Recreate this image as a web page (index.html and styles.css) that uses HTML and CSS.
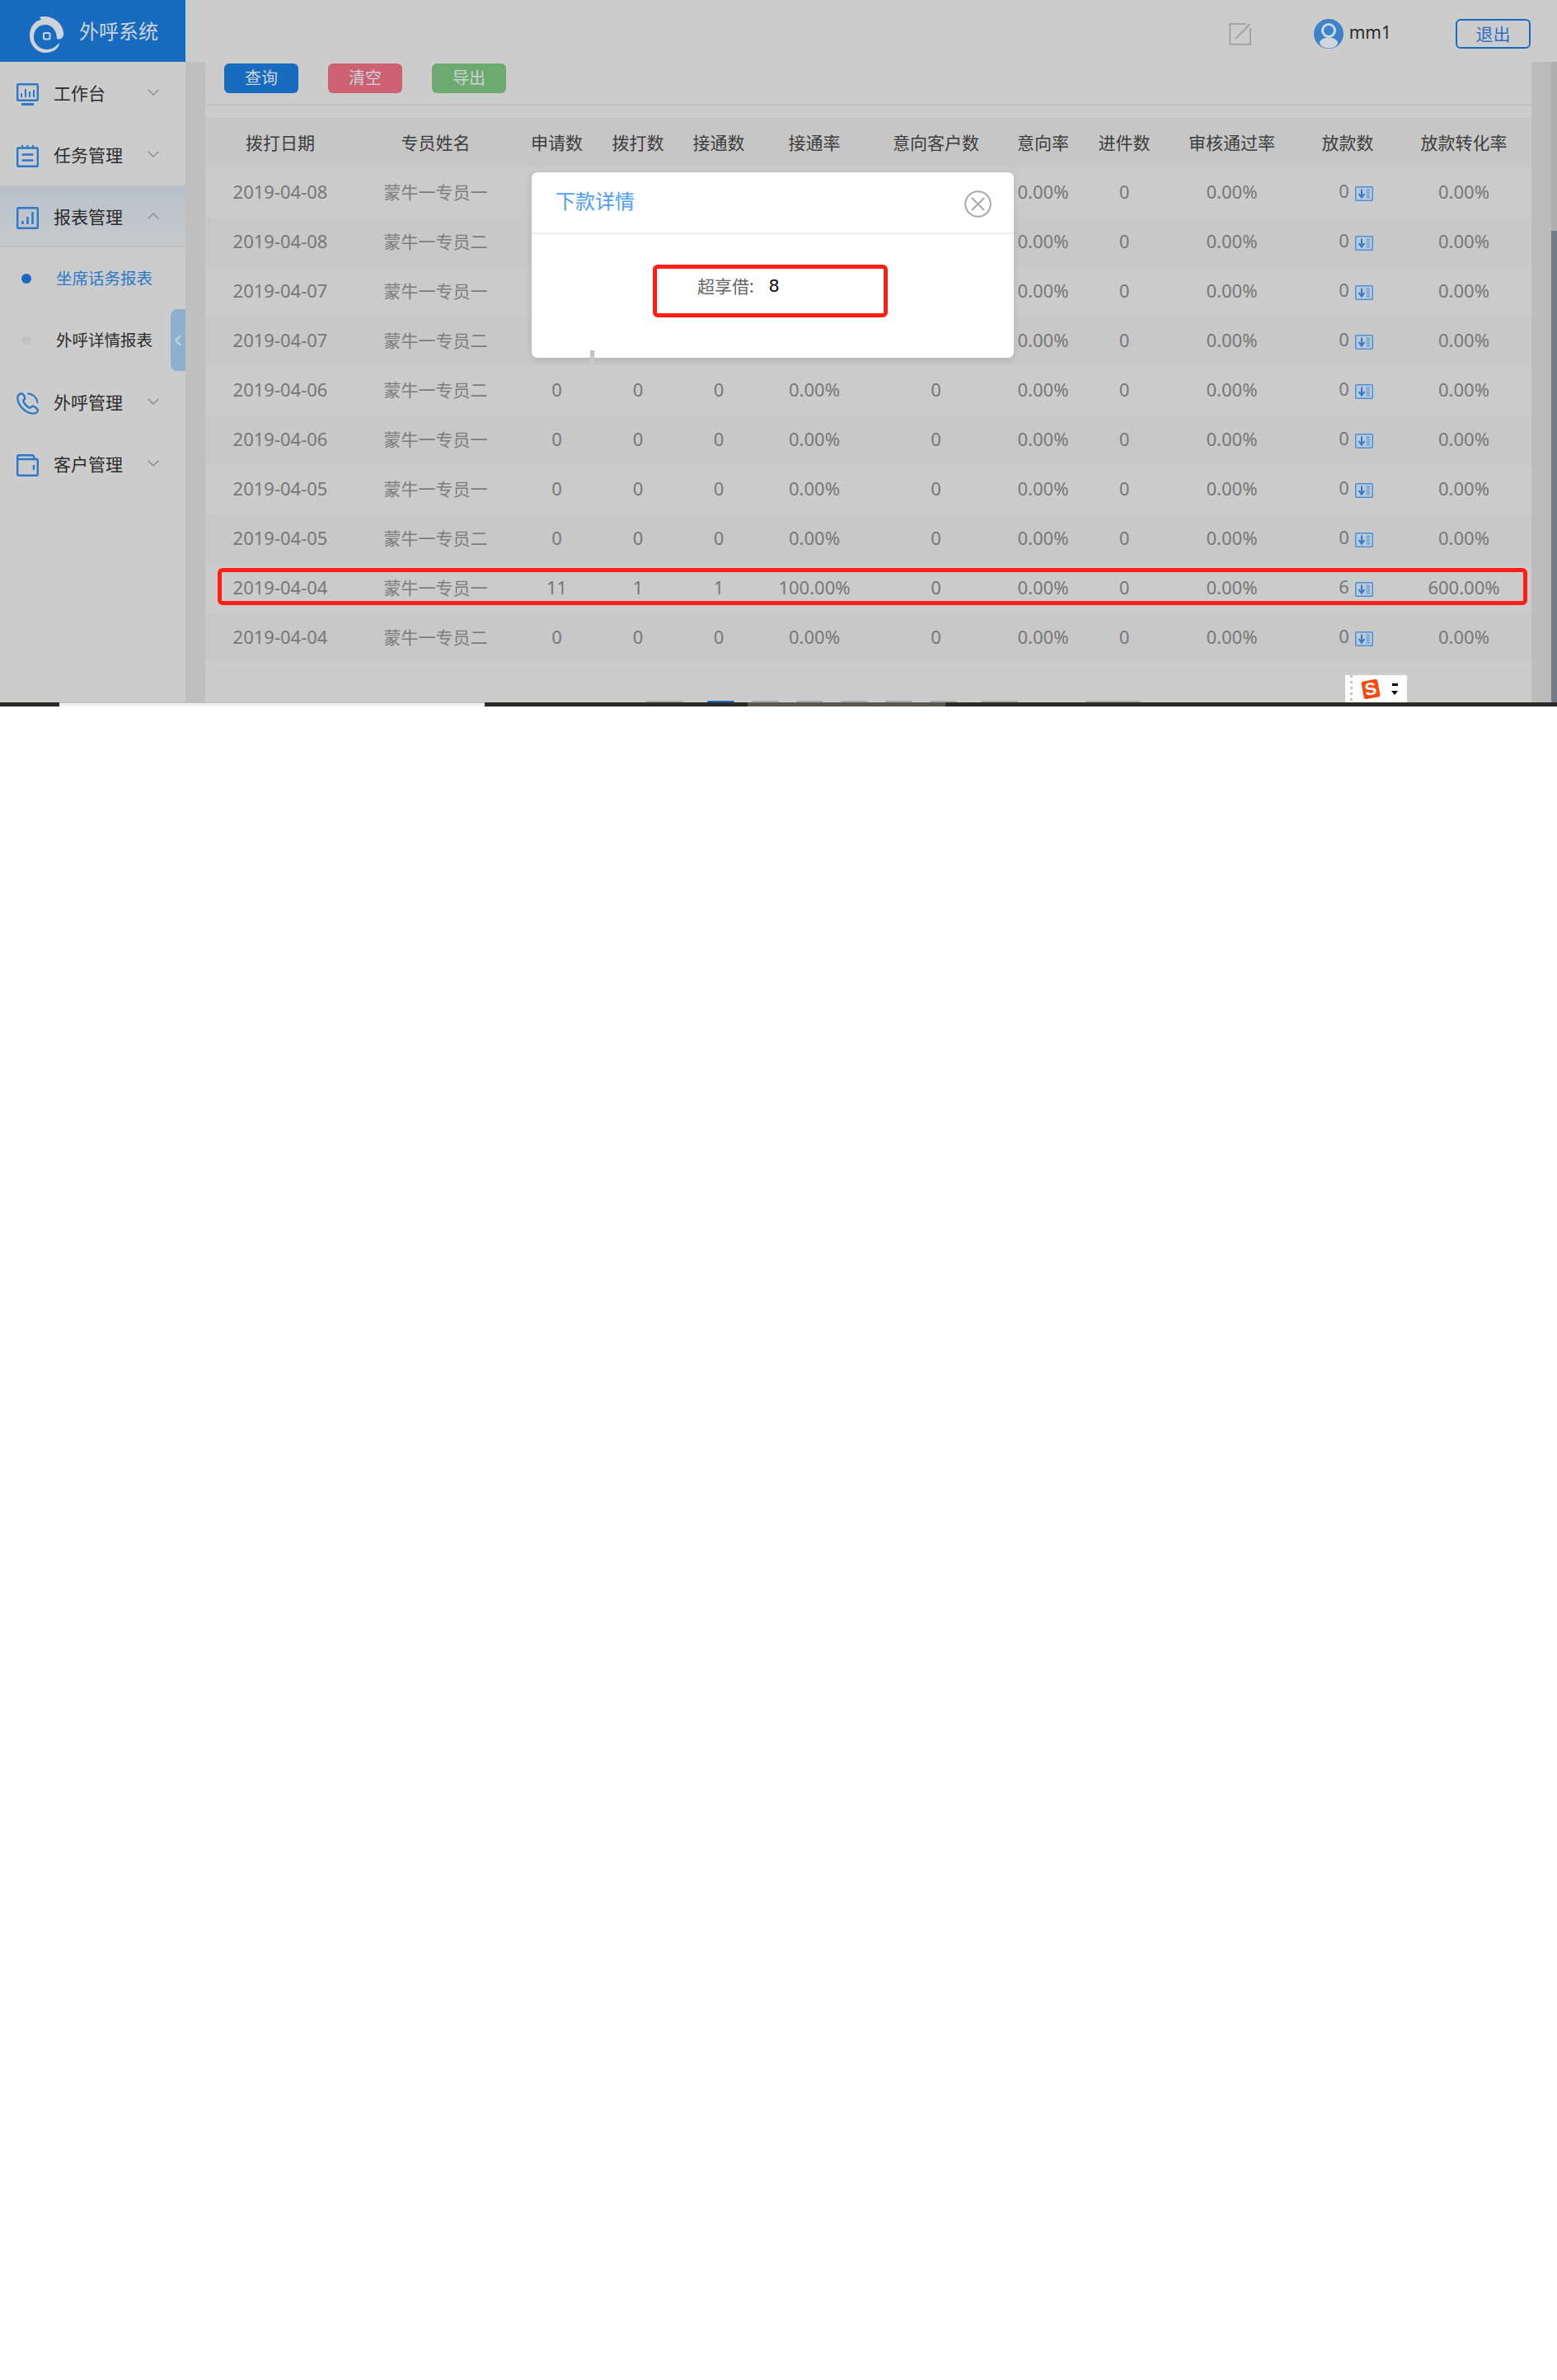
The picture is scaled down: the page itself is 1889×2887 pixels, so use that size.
FILE: index.html
```html
<!DOCTYPE html>
<html lang="zh-CN">
<head>
<meta charset="utf-8">
<title>外呼系统</title>
<link rel="stylesheet" href="styles.css">
</head>
<body>
<svg class="defs" width="0" height="0" aria-hidden="true">
  <symbol id="chev" viewBox="0 0 14 8"><polyline points="0.7,0.7 7,7 13.3,0.7" fill="none" stroke="#8a8a8a" stroke-width="1.3"/></symbol>
  <symbol id="dl" viewBox="0 0 22 18">
    <rect x="0.75" y="0.75" width="20.5" height="16.5" rx="1" fill="#bccad9" stroke="#4f8fd6" stroke-width="1.5"/>
    <path d="M8 3.5V12M4.5 9L8 13.5L11.5 9" fill="none" stroke="#2f7ad0" stroke-width="2"/>
    <path d="M13.5 4.5H18M13.5 7.5H18M13.5 10.5H18M13.5 13.5H18" stroke="#6d9fd8" stroke-width="2"/>
  </symbol>
</svg>
<div class="app">
  <aside class="side">
    <div class="brand">
      <svg class="logo" width="42" height="45" viewBox="0 0 42 45">
        <path d="M12 2C18-1 38 2 41 20C42 26 38 30 33 28C33 18 27 11 19 11C11 11 5 17 5 26C5 35 13 41 21 41C27 41 31 38 36 33C36 40 28 45 19 45C8 45 0 35 0 24C0 14 6 6 14 5Z" fill="#cfd2d6"/>
        <rect x="17" y="21" width="7.5" height="7.5" rx="1.5" fill="none" stroke="#cfd2d6" stroke-width="2"/>
      </svg>
      <span class="brand-name">外呼系统</span>
    </div>
    <nav class="menu">
      <div class="item">
        <svg class="ico" width="27" height="27" viewBox="0 0 27 27" fill="none" stroke="#2c78c9" stroke-width="2.4">
          <rect x="1.2" y="1.2" width="24.6" height="19.6" rx="1"/>
          <path d="M6 17V12M11 17V7M16 17V10M21 17V8" stroke-width="2"/>
          <path d="M6 25.5H21" stroke-width="3"/>
        </svg>
        <span class="label">工作台</span>
        <svg class="chev" width="14" height="8"><use href="#chev"/></svg>
      </div>
      <div class="item">
        <svg class="ico" width="27" height="27" viewBox="0 0 27 27" fill="none" stroke="#2c78c9" stroke-width="2.4">
          <rect x="1.2" y="3.5" width="24.6" height="22.3" rx="1"/>
          <path d="M7 0V5M13.5 0V5M20 0V5" stroke-width="2"/>
          <path d="M6.5 11.5H20.5M6.5 18.5H20.5" stroke-width="2.4"/>
        </svg>
        <span class="label">任务管理</span>
        <svg class="chev" width="14" height="8"><use href="#chev"/></svg>
      </div>
      <div class="item item-open">
        <svg class="ico" width="27" height="27" viewBox="0 0 27 27" fill="none" stroke="#2c78c9" stroke-width="2.4">
          <rect x="1.2" y="1.2" width="24.6" height="24.6" rx="1"/>
          <path d="M7.5 21V17M13.5 21V12M19.5 21V6" stroke-width="2.6"/>
        </svg>
        <span class="label">报表管理</span>
        <svg class="chev chev-up" width="14" height="8"><use href="#chev"/></svg>
      </div>
      <div class="sub sub-active"><i class="dot"></i><span>坐席话务报表</span></div>
      <div class="sub"><i class="dot"></i><span>外呼详情报表</span></div>
      <div class="item">
        <svg class="ico" width="27" height="27" viewBox="0 0 27 27" fill="none" stroke="#2c78c9" stroke-width="2.4" stroke-linecap="round">
          <path d="M6 1.5C3 1.5 1.2 4 1.3 7C1.8 15 10 25.500 20.500 25.600C23.500 25.600 25.800 23.700 25.800 21.500C25.800 19.800 21.500 16.500 19.500 16.700C17.800 16.900 17.500 19.200 15.500 18.600C12.500 17.500 8.500 12.500 8.300 10.500C8.200 9 10 8.700 10.200 7C10.400 5 8 1.500 6 1.500Z"/>
          <path d="M14 1.500C20 1.800 25 6.500 25.500 12.500" stroke-width="2"/>
        </svg>
        <span class="label">外呼管理</span>
        <svg class="chev" width="14" height="8"><use href="#chev"/></svg>
      </div>
      <div class="item">
        <svg class="ico" width="27" height="27" viewBox="0 0 27 27" fill="none" stroke="#2c78c9" stroke-width="2.4">
          <rect x="1.2" y="6" width="24.6" height="19.800" rx="1.500"/>
          <path d="M1.200 6V3C1.200 1.800 2 1.200 3 1.200H19C20.500 1.200 21.500 3 22 6" />
          <path d="M21 13V19" stroke-width="2.400"/>
        </svg>
        <span class="label">客户管理</span>
        <svg class="chev" width="14" height="8"><use href="#chev"/></svg>
      </div>
    </nav>
    <div class="collapse">
      <svg width="8" height="14" viewBox="0 0 8 14"><polyline points="7,1 1.500,7 7,13" fill="none" stroke="#c5d3e0" stroke-width="2"/></svg>
    </div>
  </aside>

  <main class="main">
    <header class="topbar">
      <svg class="pencil" width="27" height="27" viewBox="0 0 27 27" fill="none" stroke="#a3a3a3" stroke-width="2">
        <path d="M21 1H1.200V25.800H26V6"/>
        <path d="M8 19L25.500 1" />
      </svg>
      <svg class="avatar" width="36" height="36" viewBox="0 0 36 36">
        <circle cx="18" cy="18" r="18" fill="#3b83cb"/>
        <circle cx="18" cy="14" r="7.500" fill="#3b83cb" stroke="#cfd6dc" stroke-width="3"/>
        <ellipse cx="18" cy="29" rx="11" ry="6.500" fill="#cfd6dc"/>
      </svg>
      <span class="user">mm1</span>
      <button class="logout" type="button">退出</button>
    </header>
    <div class="workspace">
      <div class="gutter"></div>
      <section class="content">
        <div class="toolbar">
          <button class="btn btn-blue" type="button">查询</button>
          <button class="btn btn-red" type="button">清空</button>
          <button class="btn btn-green" type="button">导出</button>
        </div>
        <table class="grid">
          <thead>
            <tr><th>拨打日期</th><th>专员姓名</th><th>申请数</th><th>拨打数</th><th>接通数</th><th>接通率</th><th>意向客户数</th><th>意向率</th><th>进件数</th><th>审核通过率</th><th>放款数</th><th>放款转化率</th></tr>
          </thead>
          <tbody>
            <tr><td>2019-04-08</td><td class="name">蒙牛一专员一</td><td>0</td><td>0</td><td>0</td><td>0.00%</td><td>0</td><td>0.00%</td><td>0</td><td>0.00%</td><td class="pay">0<svg class="dl" width="22" height="18"><use href="#dl"/></svg></td><td>0.00%</td></tr>
            <tr><td>2019-04-08</td><td class="name">蒙牛一专员二</td><td>0</td><td>0</td><td>0</td><td>0.00%</td><td>0</td><td>0.00%</td><td>0</td><td>0.00%</td><td class="pay">0<svg class="dl" width="22" height="18"><use href="#dl"/></svg></td><td>0.00%</td></tr>
            <tr><td>2019-04-07</td><td class="name">蒙牛一专员一</td><td>0</td><td>0</td><td>0</td><td>0.00%</td><td>0</td><td>0.00%</td><td>0</td><td>0.00%</td><td class="pay">0<svg class="dl" width="22" height="18"><use href="#dl"/></svg></td><td>0.00%</td></tr>
            <tr><td>2019-04-07</td><td class="name">蒙牛一专员二</td><td>0</td><td>0</td><td>0</td><td>0.00%</td><td>0</td><td>0.00%</td><td>0</td><td>0.00%</td><td class="pay">0<svg class="dl" width="22" height="18"><use href="#dl"/></svg></td><td>0.00%</td></tr>
            <tr><td>2019-04-06</td><td class="name">蒙牛一专员二</td><td>0</td><td>0</td><td>0</td><td>0.00%</td><td>0</td><td>0.00%</td><td>0</td><td>0.00%</td><td class="pay">0<svg class="dl" width="22" height="18"><use href="#dl"/></svg></td><td>0.00%</td></tr>
            <tr><td>2019-04-06</td><td class="name">蒙牛一专员一</td><td>0</td><td>0</td><td>0</td><td>0.00%</td><td>0</td><td>0.00%</td><td>0</td><td>0.00%</td><td class="pay">0<svg class="dl" width="22" height="18"><use href="#dl"/></svg></td><td>0.00%</td></tr>
            <tr><td>2019-04-05</td><td class="name">蒙牛一专员一</td><td>0</td><td>0</td><td>0</td><td>0.00%</td><td>0</td><td>0.00%</td><td>0</td><td>0.00%</td><td class="pay">0<svg class="dl" width="22" height="18"><use href="#dl"/></svg></td><td>0.00%</td></tr>
            <tr><td>2019-04-05</td><td class="name">蒙牛一专员二</td><td>0</td><td>0</td><td>0</td><td>0.00%</td><td>0</td><td>0.00%</td><td>0</td><td>0.00%</td><td class="pay">0<svg class="dl" width="22" height="18"><use href="#dl"/></svg></td><td>0.00%</td></tr>
            <tr><td>2019-04-04</td><td class="name">蒙牛一专员一</td><td>11</td><td>1</td><td>1</td><td>100.00%</td><td>0</td><td>0.00%</td><td>0</td><td>0.00%</td><td class="pay">6<svg class="dl" width="22" height="18"><use href="#dl"/></svg></td><td>600.00%</td></tr>
            <tr><td>2019-04-04</td><td class="name">蒙牛一专员二</td><td>0</td><td>0</td><td>0</td><td>0.00%</td><td>0</td><td>0.00%</td><td>0</td><td>0.00%</td><td class="pay">0<svg class="dl" width="22" height="18"><use href="#dl"/></svg></td><td>0.00%</td></tr>
          </tbody>
        </table>
        <div class="pager">
          <i class="pg pg-wide"></i><i class="pg pg-on"></i><i class="pg"></i><i class="pg"></i><i class="pg"></i><i class="pg"></i><i class="pg"></i><i class="pg pg-wide pg-next"></i><i class="pg pg-input"></i>
        </div>
      </section>
      <div class="rail"><div class="thumb"></div></div>
    </div>
  </main>

  <div class="mark mark-row"></div>

  <div class="modal">
    <div class="modal-head">
      <span class="modal-title">下款详情</span>
      <svg width="33" height="33" viewBox="0 0 33 33" fill="none" stroke="#a9a9a9" stroke-width="2">
        <circle cx="16.500" cy="16.500" r="15.300"/>
        <path d="M9 9L24 24M24 9L9 24"/>
      </svg>
    </div>
    <div class="modal-body">
      <span class="kv-key">超享借:</span><span class="kv-val">8</span>
    </div>
    <div class="mark mark-modal"></div>
    <i class="tick"></i>
  </div>

  <div class="ime">
    <i class="ime-grip"></i>
    <span class="ime-logo">S</span>
    <span class="ime-arrows"><i class="ime-dash"></i><i class="ime-tri"></i></span>
  </div>
</div>
<div class="taskbar">
  <i class="tb tb-a"></i><i class="tb tb-b"></i><i class="tb tb-c"></i><i class="tb tb-d"></i><i class="tb tb-e"></i>
</div>
</body>
</html>
```
FILE: styles.css
```css
* { box-sizing: border-box; }
html, body { margin: 0; padding: 0; background: #fff; }
body {
  min-height: 2887px;
  font-family: "Noto Sans", "Noto Sans CJK SC", sans-serif;
  color: #333;
}
i { display: block; font-style: normal; }
.defs { position: absolute; }

.app { position: relative; display: flex; height: 852px; background: #ccc; overflow: hidden; }

/* sidebar */
.side { position: relative; flex: 0 0 225px; background: #ccc; }
.brand { height: 75px; background: #176cc0; display: flex; align-items: center; padding-left: 36px; gap: 18px; }
.logo { margin-top: 8px; }
.brand-name { font-size: 24px; line-height: 1; color: #cfd2d8; margin-top: 1px; }
.menu { display: flex; flex-direction: column; }
.item { height: 75px; display: flex; align-items: center; padding-left: 20px; position: relative; }
.ico { flex: none; margin-top: 3px; }
.label { font-size: 21px; line-height: 1; color: #2b2b2b; margin-left: 18px; margin-top: 1px; }
.chev { position: absolute; left: 179px; top: 33px; }
.chev-up { transform: rotate(180deg); }
.item-open { background: linear-gradient(180deg, #b8c1cc 0%, #c7c9cb 100%); border-bottom: 2px solid #bfbfbf; padding-top: 2px; }
.sub { height: 75px; display: flex; align-items: center; padding-left: 26px; font-size: 19.500px; color: #2b2b2b; }
.sub span { margin-left: 30px; line-height: 1; }
.dot { width: 12px; height: 12px; border-radius: 50%; background: #c2c2c2; }
.sub-active span { color: #2c78c9; }
.sub-active .dot { background: #176cc0; }
.collapse {
  position: absolute; left: 207px; top: 375px; width: 18px; height: 75px;
  background: #8eafce; border-radius: 8px 0 0 8px;
  display: flex; align-items: center; justify-content: center;
}

/* main */
.main { flex: 1; min-width: 0; display: flex; flex-direction: column; }
.topbar { height: 75px; flex: none; display: flex; align-items: center; justify-content: flex-end; padding: 7px 32px 0 0; }
.pencil { flex: none; margin-right: 76px; }
.avatar { flex: none; margin-right: 7px; }
.user { font-size: 21px; line-height: 1; color: #2b2b2b; margin-right: 78px; margin-bottom: 4px; }
.logout {
  width: 91px; height: 36px; padding: 0; border: 2px solid #176cc0; border-radius: 6px;
  background: transparent; color: #2c70c4; font: inherit; font-size: 21px; line-height: 1;
}
.workspace { flex: 1; display: flex; min-height: 0; }
.gutter { flex: 0 0 24px; background: #bfbfbf; }
.content { flex: 1; min-width: 0; display: flex; flex-direction: column; }
.toolbar { height: 53px; flex: none; display: flex; gap: 36px; padding: 2px 0 0 23px; border-bottom: 2px solid #c0c0c0; margin-bottom: 15px; }
.btn { width: 90px; height: 36px; padding: 0; border: 0; border-radius: 6px; font: inherit; font-size: 20px; line-height: 1; color: #cfd2d6; }
.btn-blue { background: #176cc0; }
.btn-red { background: #cc6172; }
.btn-green { background: #6cab6f; }

.grid { width: 1609px; flex: none; table-layout: fixed; border-collapse: collapse; }
.grid th, .grid td { height: 60px; padding: 0; text-align: center; vertical-align: middle; font-weight: 400; }
.grid th { background: #c6c6c6; font-size: 21px; line-height: 1; color: #3d3d3d; }
.grid td { font-size: 22px; line-height: 1; color: #777; white-space: nowrap; padding-bottom: 2px; }
.grid td.name { font-size: 21px; color: #7d7d7d; padding-bottom: 0; }
.grid tbody tr:nth-child(odd) td { background: #cbcbcb; }
.grid tbody tr:nth-child(even) td { background: #c8c8c8; }
.grid td.pay { padding-left: 20px; }
.dl { vertical-align: -4px; margin-left: 7px; }
.grid th:nth-child(1) { width: 182px; }
.grid th:nth-child(2) { width: 195px; }
.grid th:nth-child(3) { width: 99px; }
.grid th:nth-child(4) { width: 98px; }
.grid th:nth-child(5) { width: 98px; }
.grid th:nth-child(6) { width: 134px; }
.grid th:nth-child(7) { width: 161px; }
.grid th:nth-child(8) { width: 99px; }
.grid th:nth-child(9) { width: 98px; }
.grid th:nth-child(10) { width: 163px; }
.grid th:nth-child(11) { width: 118px; }
.grid th:nth-child(12) { width: 164px; }

.pager { margin-top: auto; height: 2px; display: flex; gap: 21px; padding-left: 535px; }
.pg { width: 33px; height: 2px; background: #a8a8a8; border-radius: 2px 2px 0 0; }
.pg-wide { width: 45px; margin-right: 8px; }
.pg-next { margin: 0 0 0 8px; }
.pg-on { background: #176cc0; }
.pg-input { width: 67px; margin-left: 61px; }

.rail { flex: 0 0 31px; background: linear-gradient(90deg, #bdbdbd 0, #b9b9b9 24px, #aeaeae 24px); padding: 205px 0 0 24px; }
.thumb { height: 100%; background: #777c82; border-right: 1px solid #5f7f9f; }

/* annotations */
.mark { position: absolute; border: 5px solid #ff2015; border-radius: 6px; pointer-events: none; }
.mark-row { left: 264px; top: 689px; width: 1589px; height: 45px; }

/* modal */
.modal { position: absolute; left: 645px; top: 209px; width: 585px; height: 225px; background: #fff; border-radius: 7px; box-shadow: 0 2px 8px rgba(0,0,0,.12); }
.modal-head { height: 75px; display: flex; align-items: center; justify-content: space-between; padding: 4px 27px 0 29px; border-bottom: 2px solid #eee; }
.modal-title { font-size: 24px; line-height: 1; color: #4d9df5; margin-top: -7px; }
.modal-body { display: flex; align-items: center; height: 32px; margin-top: 47px; padding-left: 201px; }
.kv-key { font-size: 21px; line-height: 1; color: #666; width: 87px; }
.kv-val { font-family: "Liberation Sans", sans-serif; font-size: 22px; line-height: 1; color: #000; }
.mark-modal { left: 147px; top: 112px; width: 285px; height: 64px; }
.tick { position: absolute; left: 71px; top: 216px; width: 5px; height: 18px; background: linear-gradient(180deg, #bdbdbd 0, #c8c8c8 50%, #cbcbcb 100%); }

/* input method badge */
.ime { position: absolute; left: 1632px; top: 819px; width: 75px; height: 33px; background: #fff; display: flex; align-items: center; }
.ime-grip { width: 3px; height: 33px; margin-left: 6px; background: repeating-linear-gradient(180deg, #c4c4c4 0 3px, #fff 3px 7px); }
.ime-logo {
  width: 20px; height: 22px; margin-left: 12px; background: #fa4a12; border-radius: 3px; transform: rotate(-10deg);
  color: #fff; font-family: "Liberation Sans", sans-serif; font-weight: 700; font-size: 21px; line-height: 22px; text-align: center;
}
.ime-arrows { margin-left: 15px; display: flex; flex-direction: column; align-items: center; gap: 6px; }
.ime-dash { width: 7px; height: 3px; background: #000; }
.ime-tri { width: 0; height: 0; border-left: 4px solid transparent; border-right: 4px solid transparent; border-top: 5px solid #000; }

/* strip at the bottom of the capture */
.taskbar { height: 5px; display: flex; background: #2c2a26; }
.tb { height: 5px; }
.tb-a { width: 72px; }
.tb-b { width: 516px; background: #f1f1f1; border-top: 1px solid #bdbdbd; }
.tb-c { width: 319px; }
.tb-d { width: 240px; background: #5a5650; }
.tb-e { flex: 1; }
```
